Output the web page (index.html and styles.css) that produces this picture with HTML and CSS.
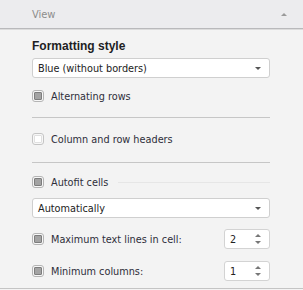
FILE: index.html
```html
<!DOCTYPE html>
<html>
<head>
<meta charset="utf-8">
<link rel="stylesheet" href="styles.css">
</head>
<body>
<div class="panel">
  <div class="header">
    <span class="header-title">View</span>
    <span class="tri-up small"></span>
  </div>
  <div class="content">
    <div class="title">Formatting style</div>
    <div class="select"><span>Blue (without borders)</span><span class="tri-down"></span></div>
    <div class="row r1"><span class="cb checked"></span><span class="label">Alternating rows</span></div>
    <div class="sep s1"></div>
    <div class="row r2"><span class="cb"></span><span class="label">Column and row headers</span></div>
    <div class="sep s2"></div>
    <div class="row r3"><span class="cb checked"></span><span class="label">Autofit cells</span><span class="faint"></span></div>
    <div class="select s-auto"><span>Automatically</span><span class="tri-down"></span></div>
    <div class="row r4"><span class="cb checked"></span><span class="label grow">Maximum text lines in cell:</span>
      <div class="spin"><span>2</span><span class="arrows"><span class="tri-up"></span><span class="tri-down"></span></span></div></div>
    <div class="row r5"><span class="cb checked"></span><span class="label grow">Minimum columns:</span>
      <div class="spin"><span>1</span><span class="arrows"><span class="tri-up"></span><span class="tri-down"></span></span></div></div>
  </div>
  <div class="bottom"></div>
</div>
</body>
</html>
```
FILE: styles.css
```css
html, body { margin: 0; padding: 0; }
body {
  background: #f3f3f3;
  font-family: "DejaVu Sans Condensed", "DejaVu Sans", sans-serif;
  font-size: 10.8px;
  color: #2e2e3a;
  width: 303px;
  height: 290px;
  overflow: hidden;
}
.panel { width: 303px; }
.header {
  height: 28px;
  background: #ececee;
  border-bottom: 1px solid #b9b9bb;
  box-shadow: 0 1px 0 #dcdcdc;
  display: flex;
  align-items: center;
  justify-content: space-between;
  padding: 0 16px 0 32px;
}
.header-title { color: #8c8c8c; font-size: 11px; }
.content { padding: 9px 33px 0 32px; }
.title {
  font-family: "Liberation Sans", Arial, sans-serif;
  font-weight: bold; font-size: 12px; line-height: 16px; color: #1e1e24;
}
.select {
  margin-top: 4px;
  height: 20px;
  box-sizing: border-box;
  background: #fff;
  border: 1px solid #cfcfcf;
  border-radius: 3px;
  display: flex;
  align-items: center;
  justify-content: space-between;
  padding: 0 8px 0 5px;
  color: #222;
}
.s-auto { margin-top: 6px; }
.row { height: 20px; display: flex; align-items: center; }
.r1 { margin-top: 8px; }
.r2 { margin-top: 11px; }
.r3 { margin-top: 9px; }
.r4 { margin-top: 11px; }
.r5 { margin-top: 12px; }
.sep { height: 1px; background: #c6c6c6; }
.s1 { margin-top: 11px; }
.s2 { margin-top: 13px; }
.cb {
  width: 12px; height: 12px; box-sizing: border-box;
  border: 1px solid #c4c4c4; border-radius: 3px; background: #f7f7f7;
  flex: none;
  display: flex; align-items: center; justify-content: center;
}
.cb::after {
  content: ""; width: 8px; height: 8px; box-sizing: border-box;
  border: 1px solid #e0e0e0; border-radius: 1px; background: #fff;
}
.cb.checked { border-color: #b4b4b4; }
.cb.checked::after { background: #a3a3a3; border-color: #7d7d7d; }
.label { margin-left: 7px; white-space: nowrap; }
.grow { flex: 1; }
.faint { flex: 1; height: 1px; background: #e6e6e6; margin-left: 10px; }
.spin {
  width: 46px; height: 20px; box-sizing: border-box;
  background: #fff; border: 1px solid #d3d3d3; border-radius: 3px;
  display: flex; align-items: center; justify-content: space-between;
  padding: 0 8px 0 5px; color: #222;
}
.arrows { display: flex; flex-direction: column; gap: 4px; align-items: center; }
.tri-down {
  width: 0; height: 0;
  border-left: 3px solid transparent; border-right: 3px solid transparent;
  border-top: 3px solid #555;
}
.tri-up {
  width: 0; height: 0;
  border-left: 3px solid transparent; border-right: 3px solid transparent;
  border-bottom: 3px solid #666;
}
.arrows .tri-up { border-bottom-color: #777; }
.arrows .tri-down { border-top-color: #777; }
.tri-up.small { border-bottom-color: #9a9a9a; }
.bottom { margin-top: 7px; height: 1px; background: #c4c4c4; }
```
